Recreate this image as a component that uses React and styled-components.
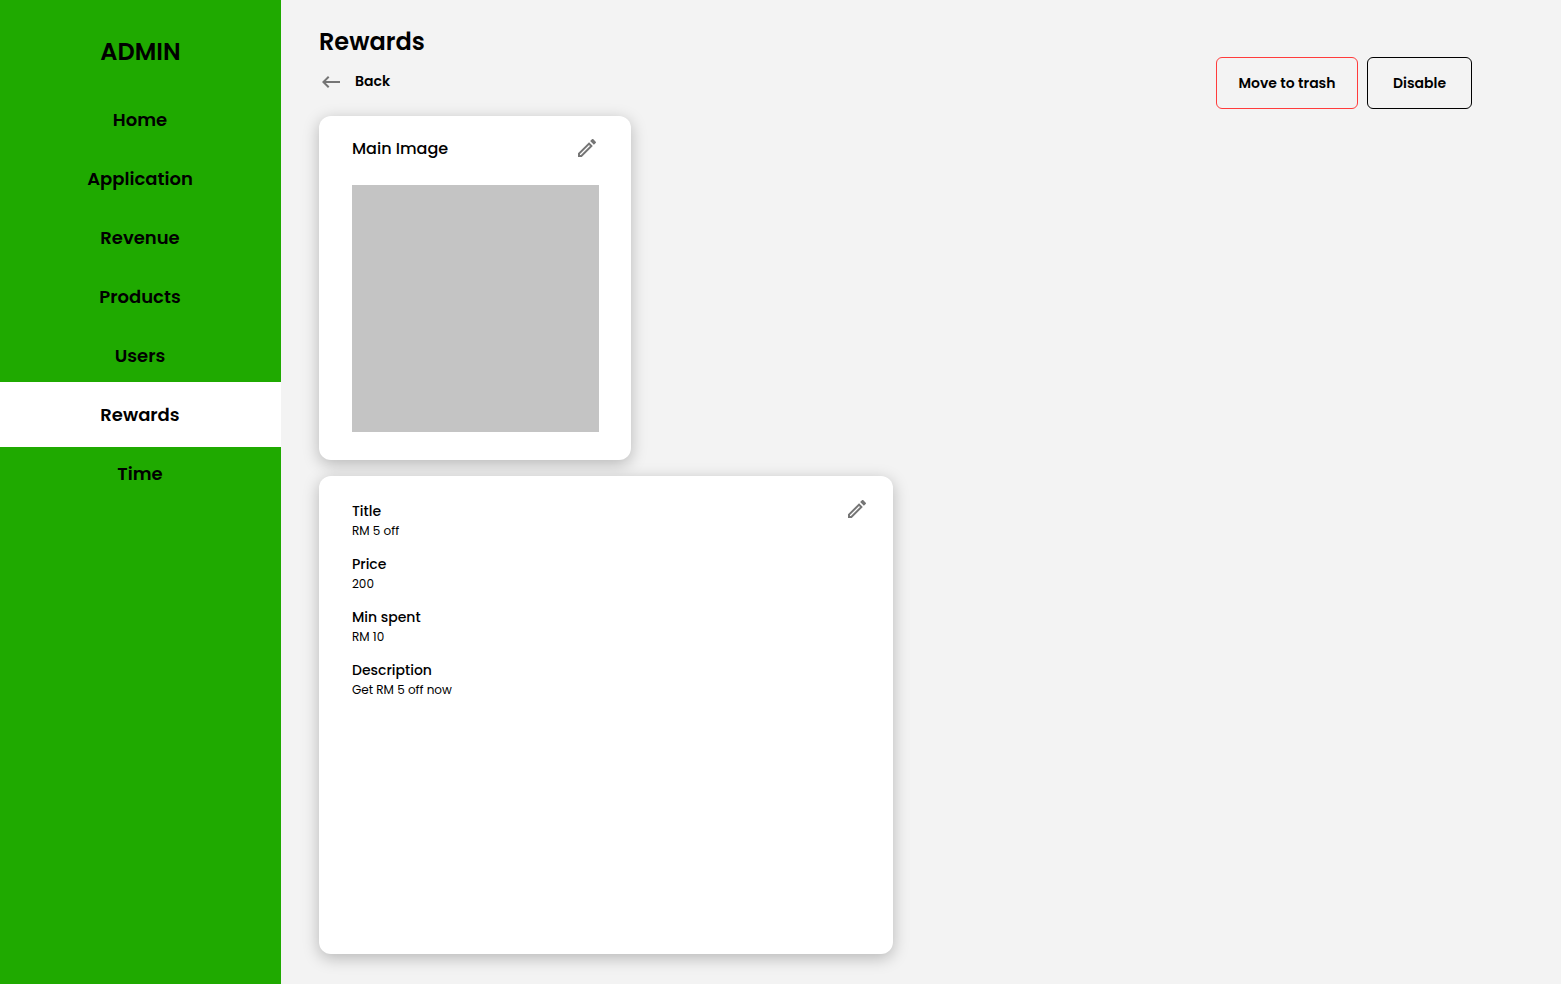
import React from "react";
import styled, { createGlobalStyle } from "styled-components";
import { MdKeyboardBackspace, MdOutlineEdit } from "react-icons/md";

const GlobalStyle = createGlobalStyle`
  *, *::before, *::after { box-sizing: border-box; }
  body {
    margin: 0;
    background: #f3f3f3;
    color: #000;
    font-family: Poppins, Inter, sans-serif;
  }
  h1, h2, p, ul, dl, dd { margin: 0; padding: 0; }
`;

const Page = styled.div`
  display: flex;
  min-height: 100vh;
`;

const Sidebar = styled.aside`
  flex: 0 0 18%;
  background: #1faa00;
  text-align: center;
`;

const Brand = styled.p`
  padding-top: 34px;
  font-size: 24px;
  line-height: 36px;
  font-weight: 600;
`;

const NavList = styled.ul`
  display: flex;
  flex-direction: column;
  margin-top: 20px;
  list-style: none;
`;

const NavItem = styled.li`
  margin: -3px 0;
`;

const NavLink = styled.a`
  display: flex;
  align-items: center;
  justify-content: center;
  height: 65px;
  padding-right: 1px;
  background: ${(p) => (p.$active ? "#fff" : "transparent")};
  color: #000;
  font-size: 18px;
  font-weight: 600;
  text-decoration: none;
`;

const Main = styled.main`
  flex: 1;
  min-width: 0;
  padding: 24px 89px 30px 38px;
`;

const TopRow = styled.header`
  display: flex;
  justify-content: space-between;
  align-items: flex-end;
  margin-bottom: 7px;
`;

const Heading = styled.div`
  align-self: flex-start;
`;

const Title = styled.h1`
  font-size: 24px;
  line-height: 36px;
  font-weight: 600;
`;

const BackLink = styled.a`
  display: flex;
  align-items: flex-start;
  gap: 12px;
  margin-top: 10px;
  color: #000;
  font-size: 14px;
  line-height: 22px;
  font-weight: 600;
  text-decoration: none;

  svg { color: #757575; }
`;

const Actions = styled.div`
  display: flex;
  gap: 9px;
  padding-top: 33px;
`;

const ActionButton = styled.button`
  min-width: ${(p) => p.$width}px;
  height: 52px;
  padding: 0 16px;
  border: 1px solid ${(p) => (p.$danger ? "#ff3b3b" : "#000")};
  border-radius: 6px;
  background: transparent;
  color: #000;
  font-family: inherit;
  font-size: 14px;
  font-weight: 600;
  cursor: pointer;
`;

const Cards = styled.div`
  display: flex;
  flex-direction: column;
  align-items: flex-start;
  gap: 16px;
`;

const Card = styled.section`
  border-radius: 12px;
  background: #fff;
  box-shadow: 0 4px 16px rgba(0, 0, 0, 0.25);
`;

const ImageCard = styled(Card)`
  padding: 20px 32px 28px 33px;
`;

const CardHeader = styled.div`
  display: flex;
  justify-content: space-between;
  align-items: flex-start;
  margin-bottom: 24px;
`;

const CardTitle = styled.h2`
  font-size: 16px;
  line-height: 25px;
  font-weight: 500;
`;

const ImagePlaceholder = styled.div`
  width: 247px;
  aspect-ratio: 1;
  background: #c4c4c4;
`;

const DetailsCard = styled(Card)`
  display: flex;
  justify-content: space-between;
  align-items: flex-start;
  width: 574px;
  max-width: 100%;
  min-height: 478px;
  padding: 21px 24px 24px 33px;
`;

const IconButton = styled.button`
  display: flex;
  padding: 0;
  border: 0;
  background: transparent;
  color: #757575;
  cursor: pointer;
`;

const Fields = styled.dl`
  display: grid;
  gap: 14px;
  padding-top: 4px;
`;

const Label = styled.dt`
  font-size: 14px;
  line-height: 21px;
  font-weight: 500;
`;

const Value = styled.dd`
  font-size: 12px;
  line-height: 18px;
`;

const navItems = ["Home", "Application", "Revenue", "Products", "Users", "Rewards", "Time"];

const fields = [
  ["Title", "RM 5 off"],
  ["Price", "200"],
  ["Min spent", "RM 10"],
  ["Description", "Get RM 5 off now"],
];

function EditButton({ label }) {
  return (
    <IconButton type="button" aria-label={label}>
      <MdOutlineEdit size={24} />
    </IconButton>
  );
}

export default function App() {
  return (
    <>
      <GlobalStyle />
      <Page>
        <Sidebar>
          <Brand>ADMIN</Brand>
          <nav>
            <NavList>
              {navItems.map((name) => (
                <NavItem key={name}>
                  <NavLink
                    href="#"
                    $active={name === "Rewards"}
                    aria-current={name === "Rewards" ? "page" : undefined}
                  >
                    {name}
                  </NavLink>
                </NavItem>
              ))}
            </NavList>
          </nav>
        </Sidebar>
        <Main>
          <TopRow>
            <Heading>
              <Title>Rewards</Title>
              <BackLink href="#">
                <MdKeyboardBackspace size={24} />
                Back
              </BackLink>
            </Heading>
            <Actions>
              <ActionButton type="button" $danger $width={142}>Move to trash</ActionButton>
              <ActionButton type="button" $width={105}>Disable</ActionButton>
            </Actions>
          </TopRow>
          <Cards>
            <ImageCard>
              <CardHeader>
                <CardTitle>Main Image</CardTitle>
                <EditButton label="Edit main image" />
              </CardHeader>
              <ImagePlaceholder />
            </ImageCard>
            <DetailsCard>
              <Fields>
                {fields.map(([label, value]) => (
                  <div key={label}>
                    <Label>{label}</Label>
                    <Value>{value}</Value>
                  </div>
                ))}
              </Fields>
              <EditButton label="Edit details" />
            </DetailsCard>
          </Cards>
        </Main>
      </Page>
    </>
  );
}
